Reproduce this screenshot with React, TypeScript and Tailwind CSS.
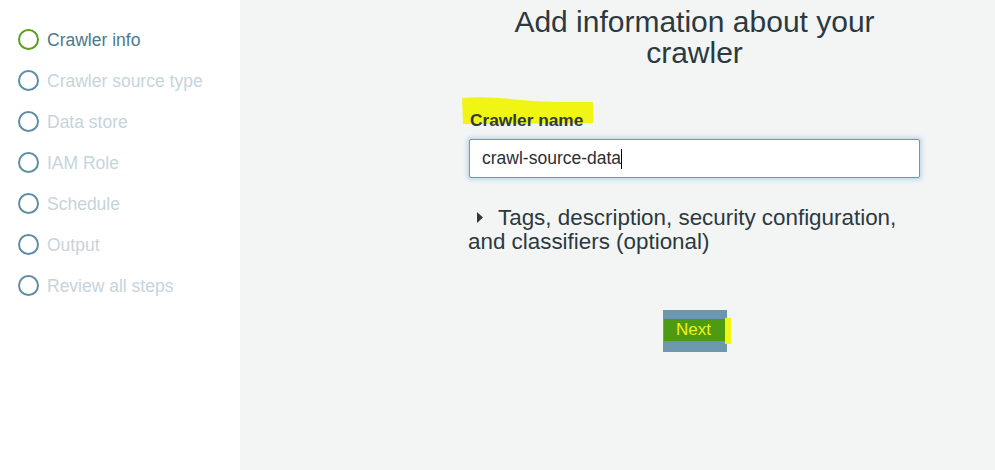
import React from "react";

const steps = [
  "Crawler info",
  "Crawler source type",
  "Data store",
  "IAM Role",
  "Schedule",
  "Output",
  "Review all steps",
];

export default function App() {
  return (
    <div
      className="flex w-[995px] h-[470px] overflow-hidden"
      style={{ fontFamily: '"Liberation Sans", Arial, sans-serif' }}
    >
      <aside className="w-[240px] shrink-0 bg-white pt-[19px] pl-[18px]">
        {steps.map((s, i) => (
          <div key={s} className="flex items-center h-[41px]">
            <span
              className={
                i === 0
                  ? "w-[21px] h-[21px] rounded-full border-2 border-[#5a9e23] box-border"
                  : "w-[21px] h-[21px] rounded-full border-2 border-[#5e8ea6] box-border"
              }
            />
            <span
              className={
                i === 0
                  ? "ml-[8px] text-[17.5px] leading-[20px] text-[#4a7a8c]"
                  : "ml-[8px] text-[17.5px] leading-[20px] text-[#c6d4db]"
              }
            >
              {s}
            </span>
          </div>
        ))}
      </aside>
      <main className="flex-1 bg-[#f3f5f5]">
        <div className="ml-[229px] w-[451px] flex flex-col">
          <h1 className="pt-[6px] text-[30px] leading-[31px] text-center text-[#2c393f] font-normal">
            Add information about your crawler
          </h1>
          <div className="relative mt-[41px] h-[20px] ml-[1px]">
            <svg
              className="absolute left-[-8px] top-[-12px]"
              width="132"
              height="27"
              viewBox="0 0 132 27"
            >
              <path
                d="M0 1 C20 -1 40 1 60 3 C80 5 100 5 131 5 L131 26 L1 27 Z"
                fill="#f0f514"
              />
            </svg>
            <span className="relative font-bold text-[17.3px] leading-[20px] text-[#2e3a40]">
              Crawler name
            </span>
          </div>
          <div className="mt-[10px] h-[39px] bg-white border border-[#6f98ae] rounded-[2px] shadow-[0_0_4px_2px_#c2d8e6] flex items-center pl-[12px]">
            <span className="text-[17.5px] text-[#2b2f33]">crawl-source-data</span>
            <span className="w-[1px] h-[20px] bg-black" />
          </div>
          <p className="mt-[28px] text-[22.4px] leading-[24px] text-[#2c393f] -ml-[1px]">
            <svg
              className="inline-block ml-[9px] mr-[15px] align-[2px]"
              width="6"
              height="11"
              viewBox="0 0 6 11"
            >
              <path d="M0 0 L6 5.5 L0 11 Z" fill="#2c393f" />
            </svg>
            Tags, description, security configuration, and classifiers (optional)
          </p>
          <div className="relative mt-[56px] mx-auto w-[64px] h-[42px] bg-[#6c97ad]">
            <div className="absolute left-[1px] top-[9px] w-[62px] h-[22px] bg-[#4e9a12] flex items-center justify-center">
              <span className="text-[17px] leading-[20px] text-[#eef21a] mr-[2px]">Next</span>
            </div>
            <div className="absolute left-[62px] top-[8px] w-[6px] h-[26px] bg-[#f0f514]" />
          </div>
        </div>
      </main>
    </div>
  );
}
